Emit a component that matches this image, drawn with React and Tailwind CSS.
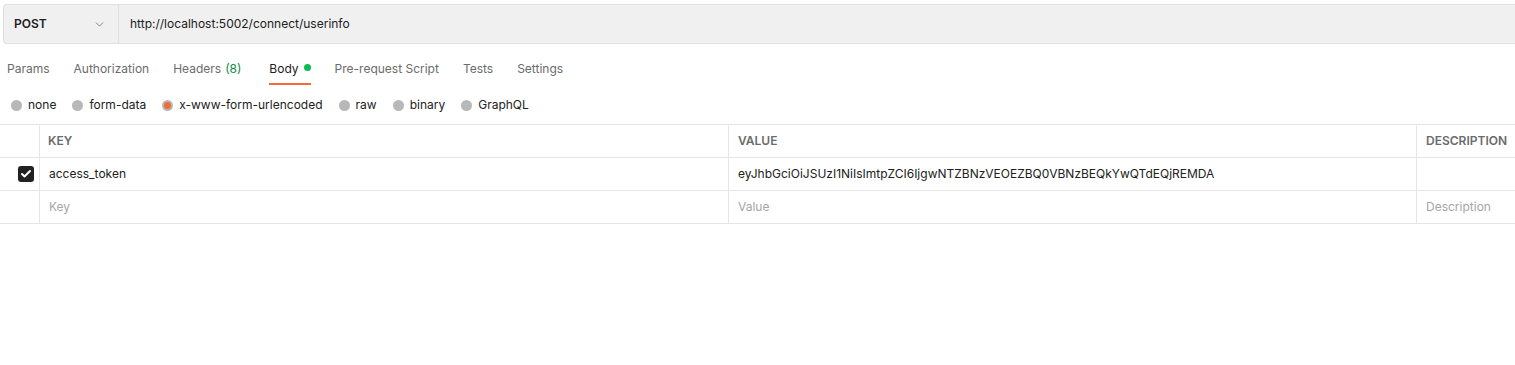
import { ChevronDown, Check } from 'lucide-react'

const tabs = ['Params', 'Authorization', 'Headers', 'Body', 'Pre-request Script', 'Tests', 'Settings']
const bodyTypes = ['none', 'form-data', 'x-www-form-urlencoded', 'raw', 'binary', 'GraphQL']

export default function App() {
  return (
    <div className="min-h-screen bg-white text-[#212121]" style={{ fontFamily: 'Inter, "Noto Sans", sans-serif' }}>
      {/* request bar */}
      <div className="pt-[4px] pl-[3px]">
        <div className="flex h-[40px] rounded-l-[4px] border border-r-0 border-[#e0e0e0] bg-[#f0f0f0]">
          <div className="flex w-[115px] items-center justify-between border-r border-[#e0e0e0] pl-[10px] pr-[12px]">
            <span className="text-[12px] font-semibold">POST</span>
            <ChevronDown size={13} strokeWidth={1.5} className="text-[#6b6b6b]" />
          </div>
          <div className="flex items-center pl-[11px] text-[12px]">http://localhost:5002/connect/userinfo</div>
        </div>
      </div>

      {/* tabs */}
      <div className="mt-[11px] flex h-[30px] gap-[24px] pl-[7px] text-[12px] text-[#6b6b6b]">
        {tabs.map(t => (
          <div
            key={t}
            className={`flex h-full items-start pt-[5px] ${t === 'Body' ? 'border-b-2 border-[#f26b3a] text-[#212121]' : ''} ${t === 'Headers' ? 'pr-[4px]' : ''}`}
          >
            {t}
            {t === 'Headers' && <span className="ml-[4px] text-[#0f8a3f]">(8)</span>}
            {t === 'Body' && <span className="ml-[5px] mt-[4px] h-[7px] w-[7px] rounded-full bg-[#0cbb52]" />}
          </div>
        ))}
      </div>

      {/* body types */}
      <div className="mt-[8px] flex h-[24px] items-center gap-[16px] pl-[11px] text-[12px] text-[#212121]">
        {bodyTypes.map(b => (
          <label key={b} className="flex items-center gap-[6px]">
            <span className="flex h-[11px] w-[11px] items-center justify-center rounded-full bg-[#b8b8b8]">
              {b === 'x-www-form-urlencoded' && <span className="h-[7px] w-[7px] rounded-full bg-[#f26b3a]" />}
            </span>
            {b}
          </label>
        ))}
      </div>

      {/* table */}
      <div className="mt-[7px] grid grid-cols-[40px_689px_688px_1fr] border-t border-[#e6e6e6] text-[12px]">
        <div className="h-[33px] border-b border-r border-[#e6e6e6]" />
        <div className="flex h-[33px] items-center border-b border-r border-[#e6e6e6] pl-[8px] font-semibold text-[#6b6b6b]">KEY</div>
        <div className="flex h-[33px] items-center border-b border-r border-[#e6e6e6] pl-[9px] font-semibold text-[#6b6b6b]">VALUE</div>
        <div className="flex h-[33px] items-center border-b border-[#e6e6e6] pl-[9px] font-semibold text-[#6b6b6b]">DESCRIPTION</div>

        <div className="flex h-[33px] items-center justify-end border-b border-r border-[#e6e6e6] pr-[5px]">
          <span className="flex h-[16px] w-[16px] items-center justify-center rounded-[3px] bg-[#212121]">
            <Check size={12} strokeWidth={4} className="text-white" />
          </span>
        </div>
        <div className="flex h-[33px] items-center border-b border-r border-[#e6e6e6] pl-[9px]">access_token</div>
        <div className="flex h-[33px] items-center border-b border-r border-[#e6e6e6] pl-[9px]">
          eyJhbGciOiJSUzI1NiIsImtpZCI6IjgwNTZBNzVEOEZBQ0VBNzBEQkYwQTdEQjREMDA
        </div>
        <div className="h-[33px] border-b border-[#e6e6e6]" />

        <div className="h-[33px] border-b border-r border-[#e6e6e6]" />
        <div className="flex h-[33px] items-center border-b border-r border-[#e6e6e6] pl-[9px] text-[#a6a6a6]">Key</div>
        <div className="flex h-[33px] items-center border-b border-r border-[#e6e6e6] pl-[9px] text-[#a6a6a6]">Value</div>
        <div className="flex h-[33px] items-center border-b border-[#e6e6e6] pl-[9px] text-[#a6a6a6]">Description</div>
      </div>
    </div>
  )
}
